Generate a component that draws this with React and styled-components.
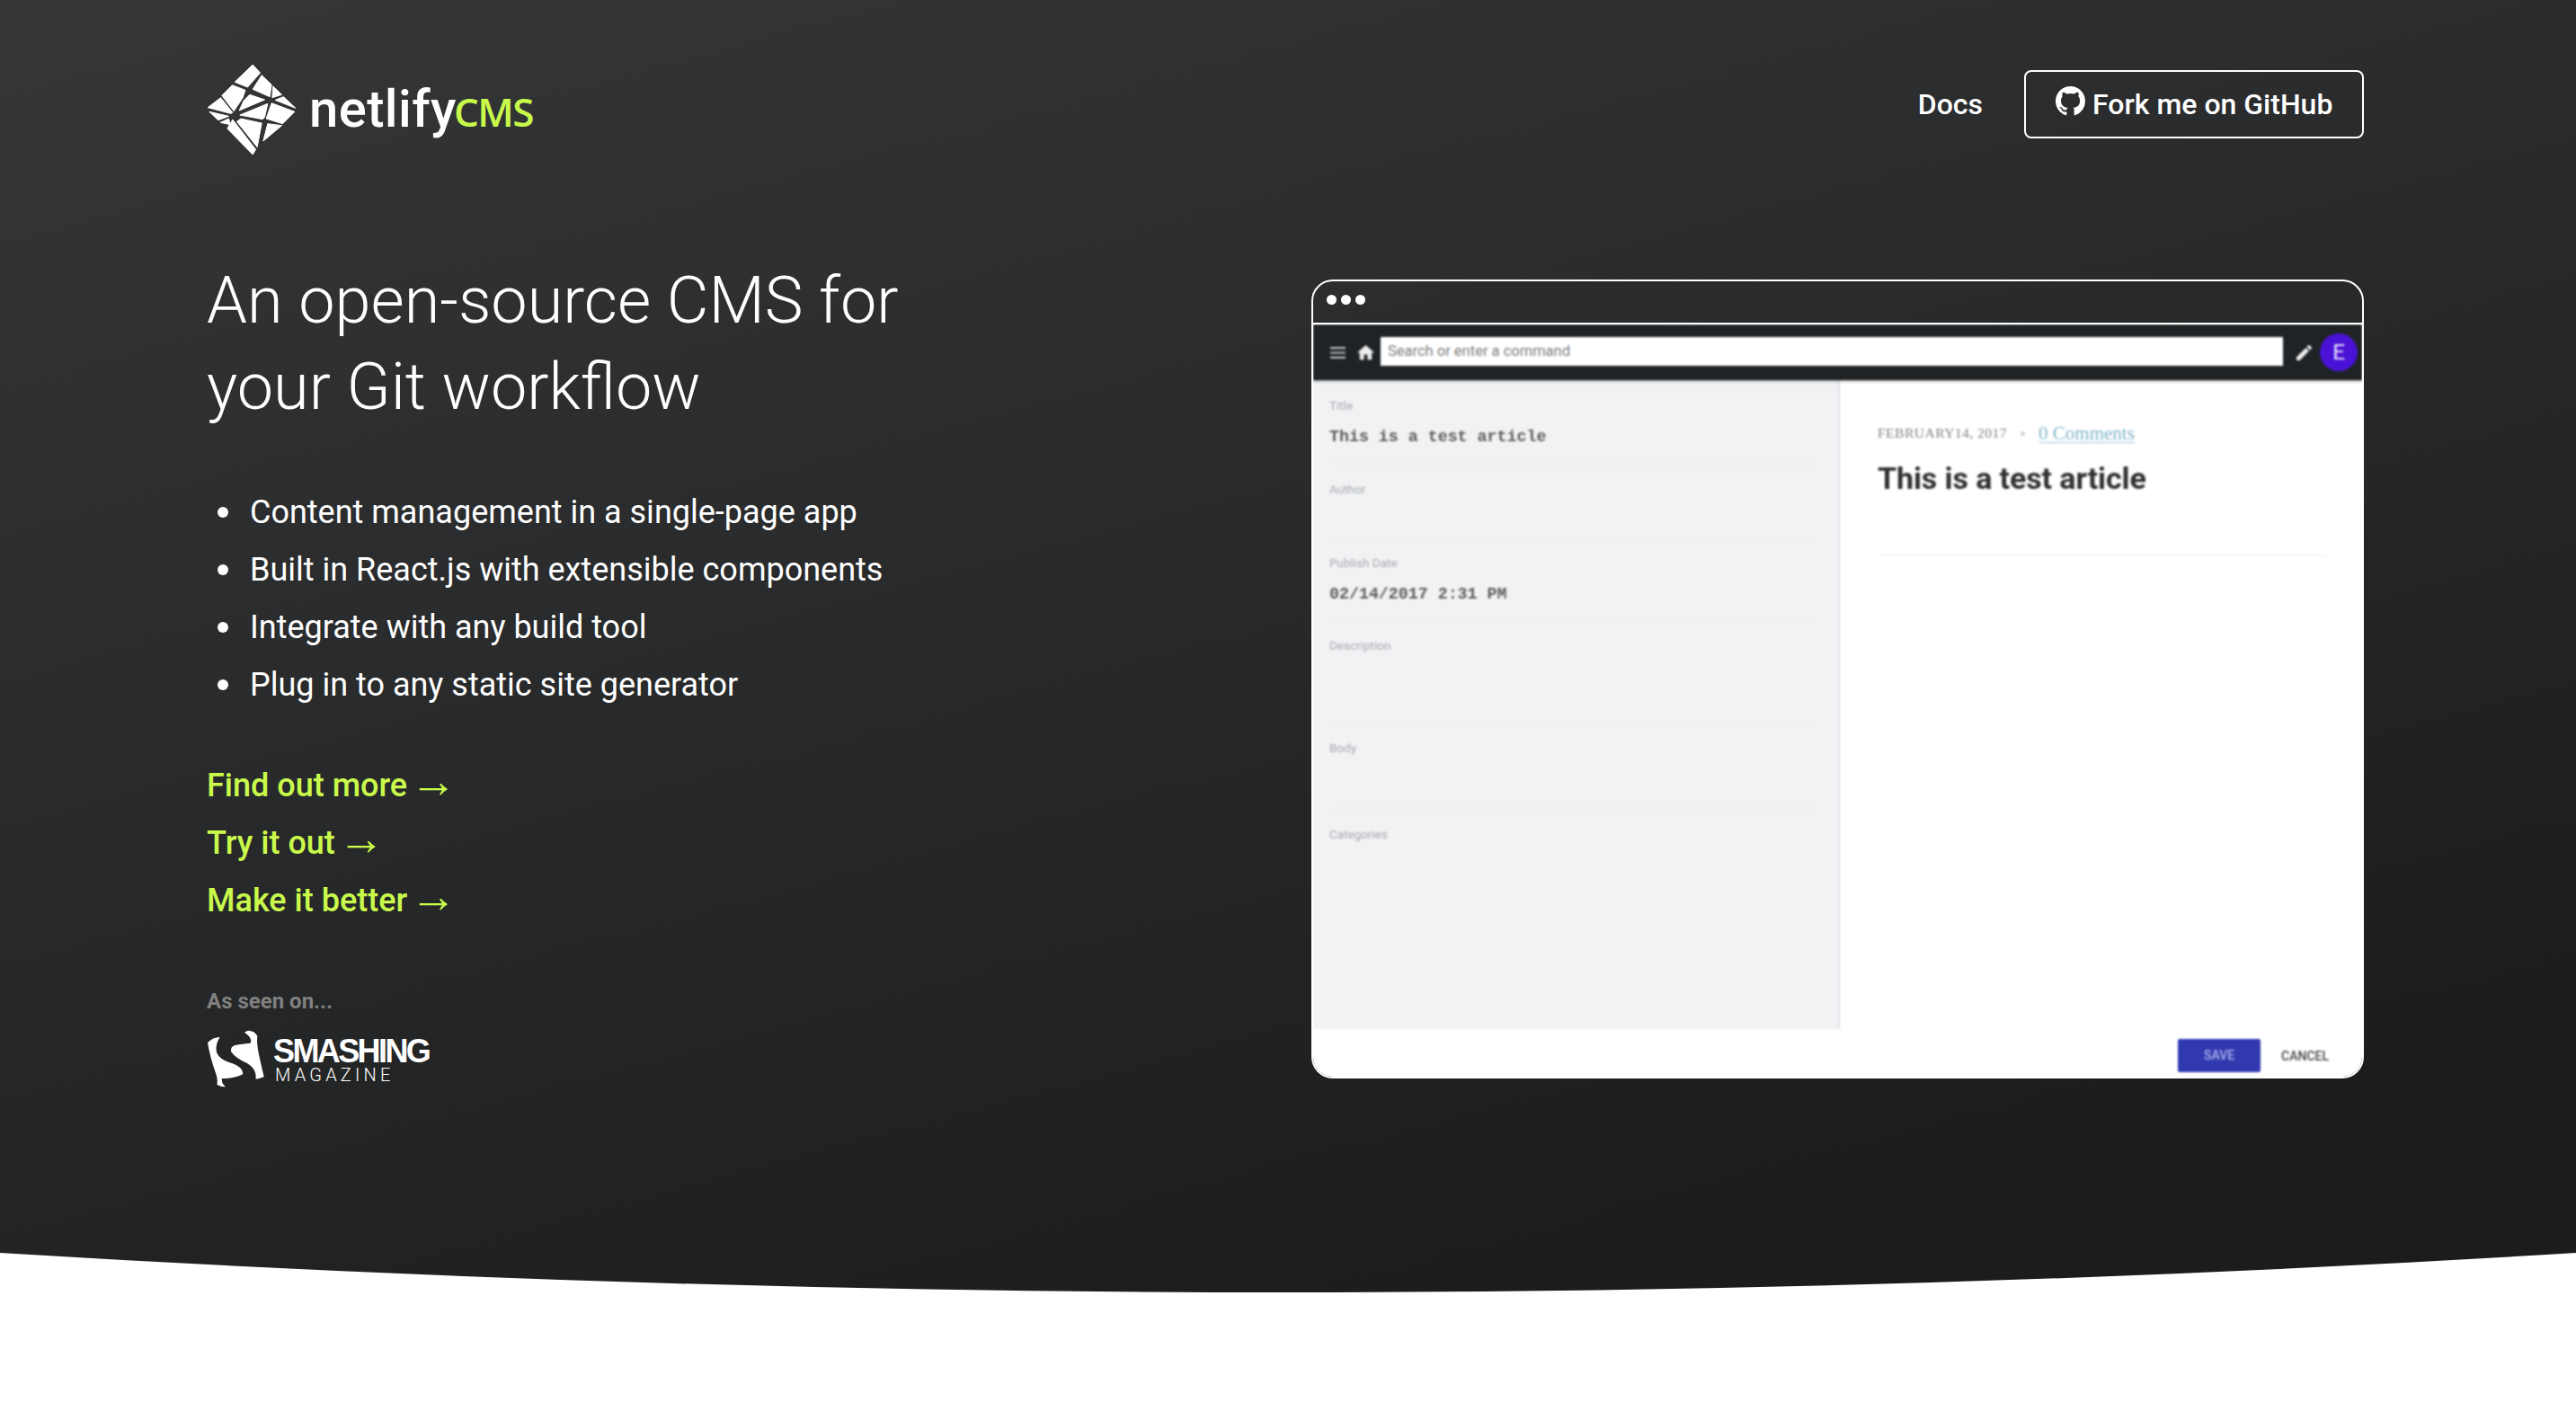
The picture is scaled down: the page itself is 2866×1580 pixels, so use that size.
import React from "react"
import styled, { createGlobalStyle } from "styled-components"

const GlobalStyle = createGlobalStyle`
  html, body { margin: 0; padding: 0; background: #fff; }
  body { font-family: Roboto, "Liberation Sans", sans-serif; color: #fff; height: 1580px; overflow: hidden; }
  * { box-sizing: border-box; }
`

const features = [
  "Content management in a single-page app",
  "Built in React.js with extensible components",
  "Integrate with any build tool",
  "Plug in to any static site generator",
]

const links = ["Find out more", "Try it out", "Make it better"]

const NetlifyMark = () => (
  <svg width="100" height="100" viewBox="15 15 293 300" fill="#fff" stroke="#fff" strokeWidth="3" strokeLinejoin="round">
    <polygon points="165,15 190,42 148,90 105,73" />
    <polygon points="195,50 228,82 222,122 165,97" />
    <polygon points="233,87 262,115 230,125" />
    <polygon points="268,122 308,160 240,133" />
    <polygon points="97,83 140,100 132,125 102,170 62,118" />
    <polygon points="58,125 98,175 92,178 15,158" />
    <polygon points="155,115 205,132 120,168 135,135" />
    <polygon points="228,143 305,172 265,212 210,195" />
    <polygon points="122,183 215,145 205,190 198,197" />
    <polygon points="20,172 85,187 50,200" />
    <polygon points="57,208 85,195 90,215" />
    <polygon points="125,195 195,210 180,290 112,205" />
    <polygon points="98,198 175,298 165,315 80,228" />
    <polygon points="215,212 262,218 200,270" />
  </svg>
)

const GithubMark = () => (
  <svg width="33" height="33" viewBox="0 0 16 16" fill="#fff">
    <path d="M8 0C3.58 0 0 3.58 0 8c0 3.54 2.29 6.53 5.47 7.59.4.07.55-.17.55-.38 0-.19-.01-.82-.01-1.49-2.01.37-2.53-.49-2.69-.94-.09-.23-.48-.94-.82-1.13-.28-.15-.68-.52-.01-.53.63-.01 1.08.58 1.23.82.72 1.21 1.87.87 2.33.66.07-.52.28-.87.51-1.07-1.78-.2-3.64-.89-3.64-3.95 0-.87.31-1.59.82-2.15-.08-.2-.36-1.02.08-2.12 0 0 .67-.21 2.2.82.64-.18 1.32-.27 2-.27.68 0 1.36.09 2 .27 1.53-1.04 2.2-.82 2.2-.82.44 1.1.16 1.92.08 2.12.51.56.82 1.27.82 2.15 0 3.07-1.87 3.75-3.65 3.95.29.25.54.73.54 1.48 0 1.07-.01 1.93-.01 2.2 0 .21.15.46.55.38A8.013 8.013 0 0016 8c0-4.42-3.58-8-8-8z" />
  </svg>
)

const SmashingMark = () => (
  <svg width="64" height="64" viewBox="15 18 190 192" fill="#fff">
    <path d="M17 60 Q35 42 58 42 Q40 70 48 95 Q58 118 100 130 Q135 142 135 165 Q110 180 65 180 Q62 195 77 208 Q60 208 48 200 Q52 185 45 165 Q25 110 17 60Z" />
    <path d="M155 20 Q175 22 183 38 Q180 60 188 100 Q198 145 205 175 Q192 180 178 182 Q182 150 150 130 Q110 112 95 90 Q92 72 112 68 Q140 64 160 62 Q168 45 140 26 Q148 20 155 20Z" />
  </svg>
)

const HomeIcon = () => (
  <svg width="23" height="23" viewBox="0 0 24 24" fill="#eee">
    <path d="M10 20v-6h4v6h5v-8h3L12 3 2 12h3v8z" />
  </svg>
)

const MenuIcon = () => (
  <svg width="17" height="13" viewBox="3 6 18 12" fill="#bbb" preserveAspectRatio="none">
    <path d="M3 18h18v-2H3v2zm0-5h18v-2H3v2zm0-7v2h18V6H3z" />
  </svg>
)

const PencilIcon = () => (
  <svg width="17" height="17" viewBox="3 3 18 18" fill="#eee">
    <path d="M3 17.25V21h3.75L17.81 9.94l-3.75-3.75L3 17.25zM20.71 7.04a1 1 0 000-1.41l-2.34-2.34a1 1 0 00-1.41 0l-1.83 1.83 3.75 3.75 1.83-1.83z" />
  </svg>
)

const App = () => {
  return (
    <>
      <GlobalStyle />
      <Hero>
        <Header>
          <Brand>
            <NetlifyMark />
            <Wordmark>netlify</Wordmark>
            <WordmarkCms>CMS</WordmarkCms>
          </Brand>
          <Nav>
            <DocsLink>Docs</DocsLink>
            <GithubButton>
              <GithubMark />
              Fork me on GitHub
            </GithubButton>
          </Nav>
        </Header>

        <Main>
          <Intro>
            <Title>An open-source CMS for<br />your Git workflow</Title>
            <Features>
              {features.map((text) => (
                <Feature key={text}>{text}</Feature>
              ))}
            </Features>
            <Links>
              {links.map((text) => (
                <Link key={text}>{text} <Arrow>→</Arrow></Link>
              ))}
            </Links>
            <SeenOn>As seen on...</SeenOn>
            <Smashing>
              <SmashingMark />
              <SmashingText>
                <SmashingName>SMASHING</SmashingName>
                <SmashingSub>MAGAZINE</SmashingSub>
              </SmashingText>
            </Smashing>
          </Intro>

          <Browser>
            <TitleBar>
              <Dot /><Dot /><Dot />
            </TitleBar>
            <ShotFrame>
              <Shot>
                <Toolbar>
                  <MenuIcon />
                  <HomeIcon />
                  <SearchBox>Search or enter a command</SearchBox>
                  <PencilIcon />
                  <Avatar>E</Avatar>
                </Toolbar>
                <Panels>
                  <Form>
                    <Field $h={73}>
                      <FieldLabel>Title</FieldLabel>
                      <FieldValue>This is a test article</FieldValue>
                    </Field>
                    <Field $h={62}><FieldLabel>Author</FieldLabel></Field>
                    <Field $h={72}>
                      <FieldLabel>Publish Date</FieldLabel>
                      <FieldValue>02/14/2017 2:31 PM</FieldValue>
                    </Field>
                    <Field $h={94}><FieldLabel>Description</FieldLabel></Field>
                    <Field $h={76}><FieldLabel>Body</FieldLabel></Field>
                    <Field $h={40} $plain><FieldLabel>Categories</FieldLabel></Field>
                  </Form>
                  <Preview>
                    <Meta>
                      <MetaDate>FEBRUARY14, 2017</MetaDate>
                      <MetaDot />
                      <MetaLink>0 Comments</MetaLink>
                    </Meta>
                    <PreviewTitle>This is a test article</PreviewTitle>
                    <PreviewRule />
                  </Preview>
                </Panels>
                <Actions>
                  <SaveButton>SAVE</SaveButton>
                  <CancelButton>CANCEL</CancelButton>
                </Actions>
              </Shot>
            </ShotFrame>
          </Browser>
        </Main>
      </Hero>
    </>
  )
}

export default App


const Hero = styled.section`
  height: 1482px;
  padding: 72px 236px 0 230px;
  background: linear-gradient(165deg, #353638 0%, #1b1d1d 85%);
  clip-path: path("M0 0H2866V1394Q1433 1482 0 1394Z");
`
const Header = styled.header`
  display: flex;
  justify-content: space-between;
  align-items: flex-start;
`
const Brand = styled.div`
  display: flex;
  align-items: center;
  height: 100px;
`
const Wordmark = styled.span`
  margin-left: 14px;
  font-size: 58px;
  font-weight: 500;
  letter-spacing: 0.4px;
  line-height: 1;
  margin-top: -2px;
`
const WordmarkCms = styled.span`
  font-family: "Open Sans", sans-serif;
  font-size: 44px;
  font-weight: 600;
  letter-spacing: -1.6px;
  margin-left: -3px;
  color: #c9fa4b;
  line-height: 1;
  margin-top: 4px;
`
const Nav = styled.nav`
  display: flex;
  align-items: center;
  gap: 46px;
  margin-top: 6px;
`
const DocsLink = styled.a`
  font-size: 32px;
  font-weight: 500;
`
const GithubButton = styled.a`
  display: flex;
  align-items: center;
  gap: 8px;
  width: 378px;
  height: 76px;
  padding-left: 33px;
  border: 2px solid #fff;
  border-radius: 8px;
  font-size: 32px;
  font-weight: 500;
  svg { margin-top: -8px; }
`
const Main = styled.main`
  display: flex;
  justify-content: space-between;
  align-items: flex-start;
  margin-top: 115px;
`
const Intro = styled.div`
  width: 900px;
`
const Title = styled.h1`
  margin: 0;
  font-size: 72px;
  font-weight: 300;
  line-height: 96px;
`
const Features = styled.ul`
  margin: 59px 0 0;
  padding: 0;
  list-style: none;
`
const Feature = styled.li`
  display: flex;
  align-items: center;
  gap: 24px;
  font-size: 36px;
  line-height: 64px;
  &::before {
    content: "";
    width: 12px;
    height: 12px;
    margin-left: 12px;
    border-radius: 50%;
    background: #fff;
  }
`
const Links = styled.div`
  margin-top: 48px;
  display: flex;
  flex-direction: column;
`
const Link = styled.a`
  font-size: 36px;
  font-weight: 500;
  line-height: 64px;
  color: #c9fa4b;
`
const Arrow = styled.span`
  margin-left: -6px;
  font-family: "Liberation Serif", serif;
  font-size: 52px;
  font-weight: 400;
  line-height: 0;
  vertical-align: -1px;
`
const SeenOn = styled.div`
  margin-top: 62px;
  font-size: 24px;
  font-weight: 700;
  line-height: 36px;
  color: #808080;
`
const Smashing = styled.div`
  display: flex;
  align-items: center;
  gap: 10px;
  margin-top: 14px;
`
const SmashingText = styled.div`
  display: flex;
  flex-direction: column;
  padding-top: 6px;
`
const SmashingName = styled.span`
  font-family: "Liberation Sans", sans-serif;
  font-size: 36px;
  font-weight: 700;
  letter-spacing: -2.6px;
  line-height: 30px;
`
const SmashingSub = styled.span`
  font-size: 20px;
  font-weight: 300;
  letter-spacing: 4.2px;
  line-height: 22px;
  margin-left: 2px;
`
const Browser = styled.div`
  width: 1171px;
  height: 889px;
  margin-top: 24px;
  border: 2px solid #fff;
  border-radius: 24px;
  overflow: hidden;
`
const TitleBar = styled.div`
  display: flex;
  align-items: center;
  gap: 5px;
  height: 48px;
  padding: 0 15px 6px;
  border-bottom: 2px solid #fff;
`
const Dot = styled.span`
  width: 11px;
  height: 11px;
  border-radius: 50%;
  background: #fff;
`
const ShotFrame = styled.div`
  height: 837px;
  background: #fff;
  overflow: hidden;
`
const Shot = styled.div`
  display: flex;
  flex-direction: column;
  height: 100%;
  filter: blur(0.9px);
`
const Toolbar = styled.div`
  display: flex;
  align-items: center;
  height: 62px;
  padding: 0 5px 0 19px;
  background: #1f2326;
  box-shadow: 0 1px 3px rgba(0, 0, 0, 0.4);
  position: relative;
  svg:nth-child(2) { margin-left: 11px; }
  svg:nth-child(4) { margin-left: 15px; }
`
const SearchBox = styled.div`
  width: 1004px;
  height: 32px;
  margin: -2px 0 0 5px;
  padding-left: 8px;
  background: #fff;
  font-size: 16.5px;
  line-height: 32px;
  color: #808080;
`
const Avatar = styled.div`
  width: 42px;
  height: 42px;
  margin-left: 9px;
  border-radius: 50%;
  background: #4a12d6;
  text-align: center;
  font-size: 24px;
  line-height: 42px;
  color: #e8e0ff;
`
const Panels = styled.div`
  display: flex;
  height: 722px;
`
const Form = styled.div`
  display: flex;
  flex-direction: column;
  gap: 20px;
  width: 586px;
  padding: 20px 22px 0 18px;
  background: #f0f2f4;
  border-right: 2px solid #e0e2e6;
`
const Field = styled.div`
  height: ${(p) => p.$h}px;
  border-bottom: ${(p) => (p.$plain ? "none" : "1px solid #e9ebec")};
`
const FieldLabel = styled.div`
  font-size: 13.5px;
  line-height: 16px;
  color: #a8aaad;
`
const FieldValue = styled.div`
  margin-top: 17px;
  font-family: "Liberation Mono", monospace;
  font-size: 18.3px;
  font-weight: 700;
  line-height: 20px;
  color: #5c5c5c;
`
const Preview = styled.div`
  flex: 1;
  padding: 49px 38px 0 42px;
`
const Meta = styled.div`
  display: flex;
  align-items: center;
  height: 20px;
  font-family: "Liberation Serif", serif;
`
const MetaDate = styled.span`
  font-size: 15.5px;
  letter-spacing: 0.5px;
  color: #7d7d7d;
`
const MetaDot = styled.span`
  width: 5px;
  height: 5px;
  margin: 0 15px;
  border-radius: 50%;
  background: #d0d0d0;
`
const MetaLink = styled.span`
  font-size: 21px;
  color: #7fb5c9;
  border-bottom: 1px solid #9cc4d4;
  line-height: 20px;
`
const PreviewTitle = styled.div`
  margin-top: 20px;
  font-size: 34px;
  font-weight: 700;
  line-height: 40px;
  letter-spacing: -0.1px;
  color: #303030;
`
const PreviewRule = styled.div`
  height: 1px;
  margin-top: 65px;
  background: #f1f1f1;
`
const Actions = styled.div`
  display: flex;
  align-items: center;
  justify-content: flex-end;
  flex: 1;
  padding: 6px 37px 0 0;
  gap: 23px;
`
const SaveButton = styled.div`
  width: 92px;
  height: 37px;
  border-radius: 2px;
  background: #3039b0;
  text-align: center;
  font-size: 14px;
  font-weight: 500;
  line-height: 37px;
  color: #b0b6ee;
`
const CancelButton = styled.div`
  font-size: 14px;
  font-weight: 500;
  color: #444;
`
